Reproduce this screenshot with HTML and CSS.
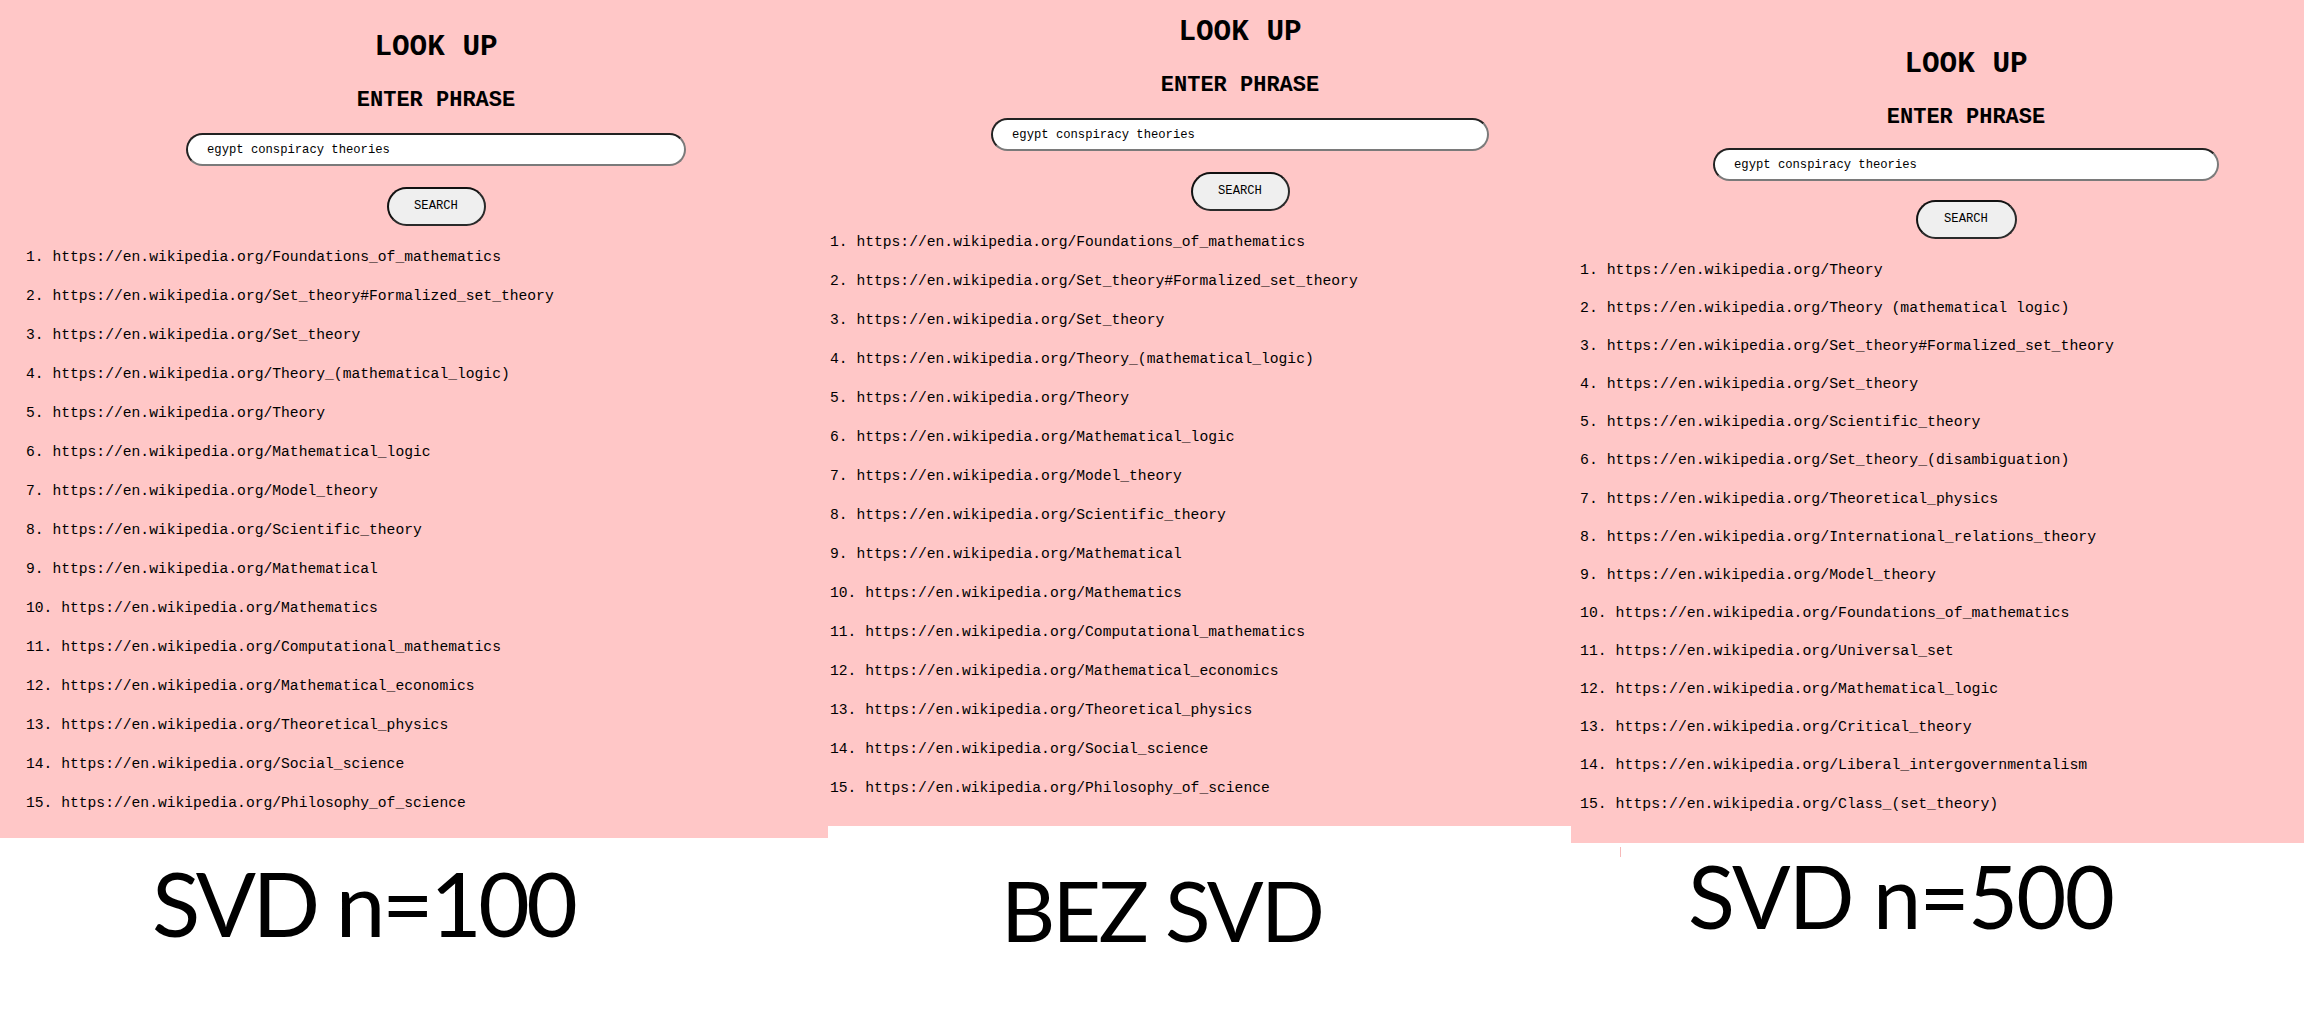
FILE: index.html
```html
<!DOCTYPE html>
<html lang="en">
<head>
<meta charset="utf-8">
<title>Look up – SVD comparison</title>
<link rel="stylesheet" href="styles.css">
</head>
<body>
<main class="sheet">
  <section class="panel p1">
    <div class="screen">
      <div class="page">
        <h1 class="title">LOOK UP</h1>
        <h2 class="subtitle">ENTER PHRASE</h2>
        <div class="field-row"><input class="query" type="text" value="egypt conspiracy theories"></div>
        <div class="button-row"><button class="search" type="button">SEARCH</button></div>
        <ol class="results">
          <li><span class="num">1.</span> https://en.wikipedia.org/Foundations_of_mathematics</li>
          <li><span class="num">2.</span> https://en.wikipedia.org/Set_theory#Formalized_set_theory</li>
          <li><span class="num">3.</span> https://en.wikipedia.org/Set_theory</li>
          <li><span class="num">4.</span> https://en.wikipedia.org/Theory_(mathematical_logic)</li>
          <li><span class="num">5.</span> https://en.wikipedia.org/Theory</li>
          <li><span class="num">6.</span> https://en.wikipedia.org/Mathematical_logic</li>
          <li><span class="num">7.</span> https://en.wikipedia.org/Model_theory</li>
          <li><span class="num">8.</span> https://en.wikipedia.org/Scientific_theory</li>
          <li><span class="num">9.</span> https://en.wikipedia.org/Mathematical</li>
          <li><span class="num">10.</span> https://en.wikipedia.org/Mathematics</li>
          <li><span class="num">11.</span> https://en.wikipedia.org/Computational_mathematics</li>
          <li><span class="num">12.</span> https://en.wikipedia.org/Mathematical_economics</li>
          <li><span class="num">13.</span> https://en.wikipedia.org/Theoretical_physics</li>
          <li><span class="num">14.</span> https://en.wikipedia.org/Social_science</li>
          <li><span class="num">15.</span> https://en.wikipedia.org/Philosophy_of_science</li>
        </ol>
      </div>
    </div>
    <div class="caption">SVD n=100</div>
  </section>

  <section class="panel p2">
    <div class="screen">
      <div class="page">
        <h1 class="title">LOOK UP</h1>
        <h2 class="subtitle">ENTER PHRASE</h2>
        <div class="field-row"><input class="query" type="text" value="egypt conspiracy theories"></div>
        <div class="button-row"><button class="search" type="button">SEARCH</button></div>
        <ol class="results">
          <li><span class="num">1.</span> https://en.wikipedia.org/Foundations_of_mathematics</li>
          <li><span class="num">2.</span> https://en.wikipedia.org/Set_theory#Formalized_set_theory</li>
          <li><span class="num">3.</span> https://en.wikipedia.org/Set_theory</li>
          <li><span class="num">4.</span> https://en.wikipedia.org/Theory_(mathematical_logic)</li>
          <li><span class="num">5.</span> https://en.wikipedia.org/Theory</li>
          <li><span class="num">6.</span> https://en.wikipedia.org/Mathematical_logic</li>
          <li><span class="num">7.</span> https://en.wikipedia.org/Model_theory</li>
          <li><span class="num">8.</span> https://en.wikipedia.org/Scientific_theory</li>
          <li><span class="num">9.</span> https://en.wikipedia.org/Mathematical</li>
          <li><span class="num">10.</span> https://en.wikipedia.org/Mathematics</li>
          <li><span class="num">11.</span> https://en.wikipedia.org/Computational_mathematics</li>
          <li><span class="num">12.</span> https://en.wikipedia.org/Mathematical_economics</li>
          <li><span class="num">13.</span> https://en.wikipedia.org/Theoretical_physics</li>
          <li><span class="num">14.</span> https://en.wikipedia.org/Social_science</li>
          <li><span class="num">15.</span> https://en.wikipedia.org/Philosophy_of_science</li>
        </ol>
      </div>
    </div>
    <div class="caption">BEZ SVD</div>
  </section>

  <section class="panel p3">
    <div class="screen">
      <div class="page">
        <h1 class="title">LOOK UP</h1>
        <h2 class="subtitle">ENTER PHRASE</h2>
        <div class="field-row"><input class="query" type="text" value="egypt conspiracy theories"></div>
        <div class="button-row"><button class="search" type="button">SEARCH</button></div>
        <ol class="results">
          <li><span class="num">1.</span> https://en.wikipedia.org/Theory</li>
          <li><span class="num">2.</span> https://en.wikipedia.org/Theory (mathematical logic)</li>
          <li><span class="num">3.</span> https://en.wikipedia.org/Set_theory#Formalized_set_theory</li>
          <li><span class="num">4.</span> https://en.wikipedia.org/Set_theory</li>
          <li><span class="num">5.</span> https://en.wikipedia.org/Scientific_theory</li>
          <li><span class="num">6.</span> https://en.wikipedia.org/Set_theory_(disambiguation)</li>
          <li><span class="num">7.</span> https://en.wikipedia.org/Theoretical_physics</li>
          <li><span class="num">8.</span> https://en.wikipedia.org/International_relations_theory</li>
          <li><span class="num">9.</span> https://en.wikipedia.org/Model_theory</li>
          <li><span class="num">10.</span> https://en.wikipedia.org/Foundations_of_mathematics</li>
          <li><span class="num">11.</span> https://en.wikipedia.org/Universal_set</li>
          <li><span class="num">12.</span> https://en.wikipedia.org/Mathematical_logic</li>
          <li><span class="num">13.</span> https://en.wikipedia.org/Critical_theory</li>
          <li><span class="num">14.</span> https://en.wikipedia.org/Liberal_intergovernmentalism</li>
          <li><span class="num">15.</span> https://en.wikipedia.org/Class_(set_theory)</li>
        </ol>
      </div>
    </div>
    <div class="stray-mark"></div>
    <div class="caption">SVD n=500</div>
  </section>
</main>
</body>
</html>
```

FILE: styles.css
```css
html, body {
  margin: 0;
  padding: 0;
  background: #ffffff;
  overflow: hidden;
}

.sheet {
  display: flex;
  align-items: flex-start;
  width: 2304px;
}

.panel {
  display: flex;
  flex-direction: column;
  flex: none;
  width: var(--panel-w);
}

.screen {
  height: var(--screen-h);
  background: #ffc7c7;
  overflow: hidden;
}

.page {
  width: var(--page-w);
  font-family: "Liberation Mono", "DejaVu Sans Mono", monospace;
  color: #000;
}

.title {
  margin: var(--top) 0 0;
  font-size: 29.33px;
  line-height: 34px;
  font-weight: 700;
  text-align: center;
}

.subtitle {
  margin: 22.9px 0 0;
  font-size: 22px;
  line-height: 26px;
  font-weight: 700;
  text-align: center;
}

.field-row,
.button-row {
  display: flex;
  justify-content: center;
}

.field-row {
  margin-top: var(--input-gap);
}

.query {
  box-sizing: border-box;
  width: var(--input-w);
  height: 33px;
  margin: 0;
  padding: 2px 0 0 19px;
  border: 2px solid #222;
  border-right-color: #7a7a7a;
  border-bottom-color: #7a7a7a;
  border-radius: 17px;
  background: #fff;
  font-family: "Liberation Mono", "DejaVu Sans Mono", monospace;
  font-size: 12.2px;
  color: #000;
  outline: none;
}

.button-row {
  margin-top: var(--button-gap);
}

.search {
  box-sizing: border-box;
  width: var(--button-w);
  height: 39px;
  margin: 0;
  padding: 0;
  border: 2px solid #111;
  border-right-color: #2a2a2a;
  border-bottom-color: #2a2a2a;
  border-radius: 20px;
  background: #efefef;
  font-family: "Liberation Mono", "DejaVu Sans Mono", monospace;
  font-size: 12.2px;
  color: #000;
}

.results {
  list-style: none;
  margin: var(--list-gap) 0 0;
  padding: 0 0 0 var(--list-left);
}

.results li {
  font-size: var(--item-size);
  line-height: 19px;
  margin-bottom: var(--item-gap);
  white-space: nowrap;
}

.caption {
  font-family: Lato, "Open Sans", sans-serif;
  font-size: var(--cap-size);
  line-height: var(--cap-size);
  color: #000;
  white-space: nowrap;
  margin-top: var(--cap-top);
  padding-left: var(--cap-left);
  letter-spacing: var(--cap-ls);
}

.stray-mark {
  width: 1px;
  height: 10px;
  margin: 4px 0 0 49px;
  background: #f7b9b9;
}

.p1 {
  --panel-w: 828px;
  --screen-h: 838px;
  --page-w: 872px;
  --top: 31.2px;
  --input-gap: 18.9px;
  --input-w: 500px;
  --button-gap: 21px;
  --button-w: 99px;
  --list-gap: 22.3px;
  --list-left: 26px;
  --item-size: 14.67px;
  --item-gap: 20px;
  --cap-size: 89px;
  --cap-top: 19.8px;
  --cap-left: 152px;
  --cap-ls: -3.5px;
}

.p2 {
  --panel-w: 743px;
  --screen-h: 826px;
  --page-w: 824px;
  --top: 16.2px;
  --input-gap: 18.9px;
  --input-w: 498px;
  --button-gap: 21px;
  --button-w: 99px;
  --list-gap: 22.3px;
  --list-left: 2px;
  --item-size: 14.67px;
  --item-gap: 20px;
  --cap-size: 84px;
  --cap-top: 41.7px;
  --cap-left: 173px;
  --cap-ls: -2.7px;
}

.p3 {
  --panel-w: 733px;
  --screen-h: 843px;
  --page-w: 790px;
  --top: 48.2px;
  --input-gap: 16.9px;
  --input-w: 506px;
  --button-gap: 19px;
  --button-w: 101px;
  --list-gap: 21.8px;
  --list-left: 9px;
  --item-size: 14.83px;
  --item-gap: 19.14px;
  --cap-size: 86.5px;
  --cap-top: -3.75px;
  --cap-left: 117px;
  --cap-ls: -1.8px;
}
```
